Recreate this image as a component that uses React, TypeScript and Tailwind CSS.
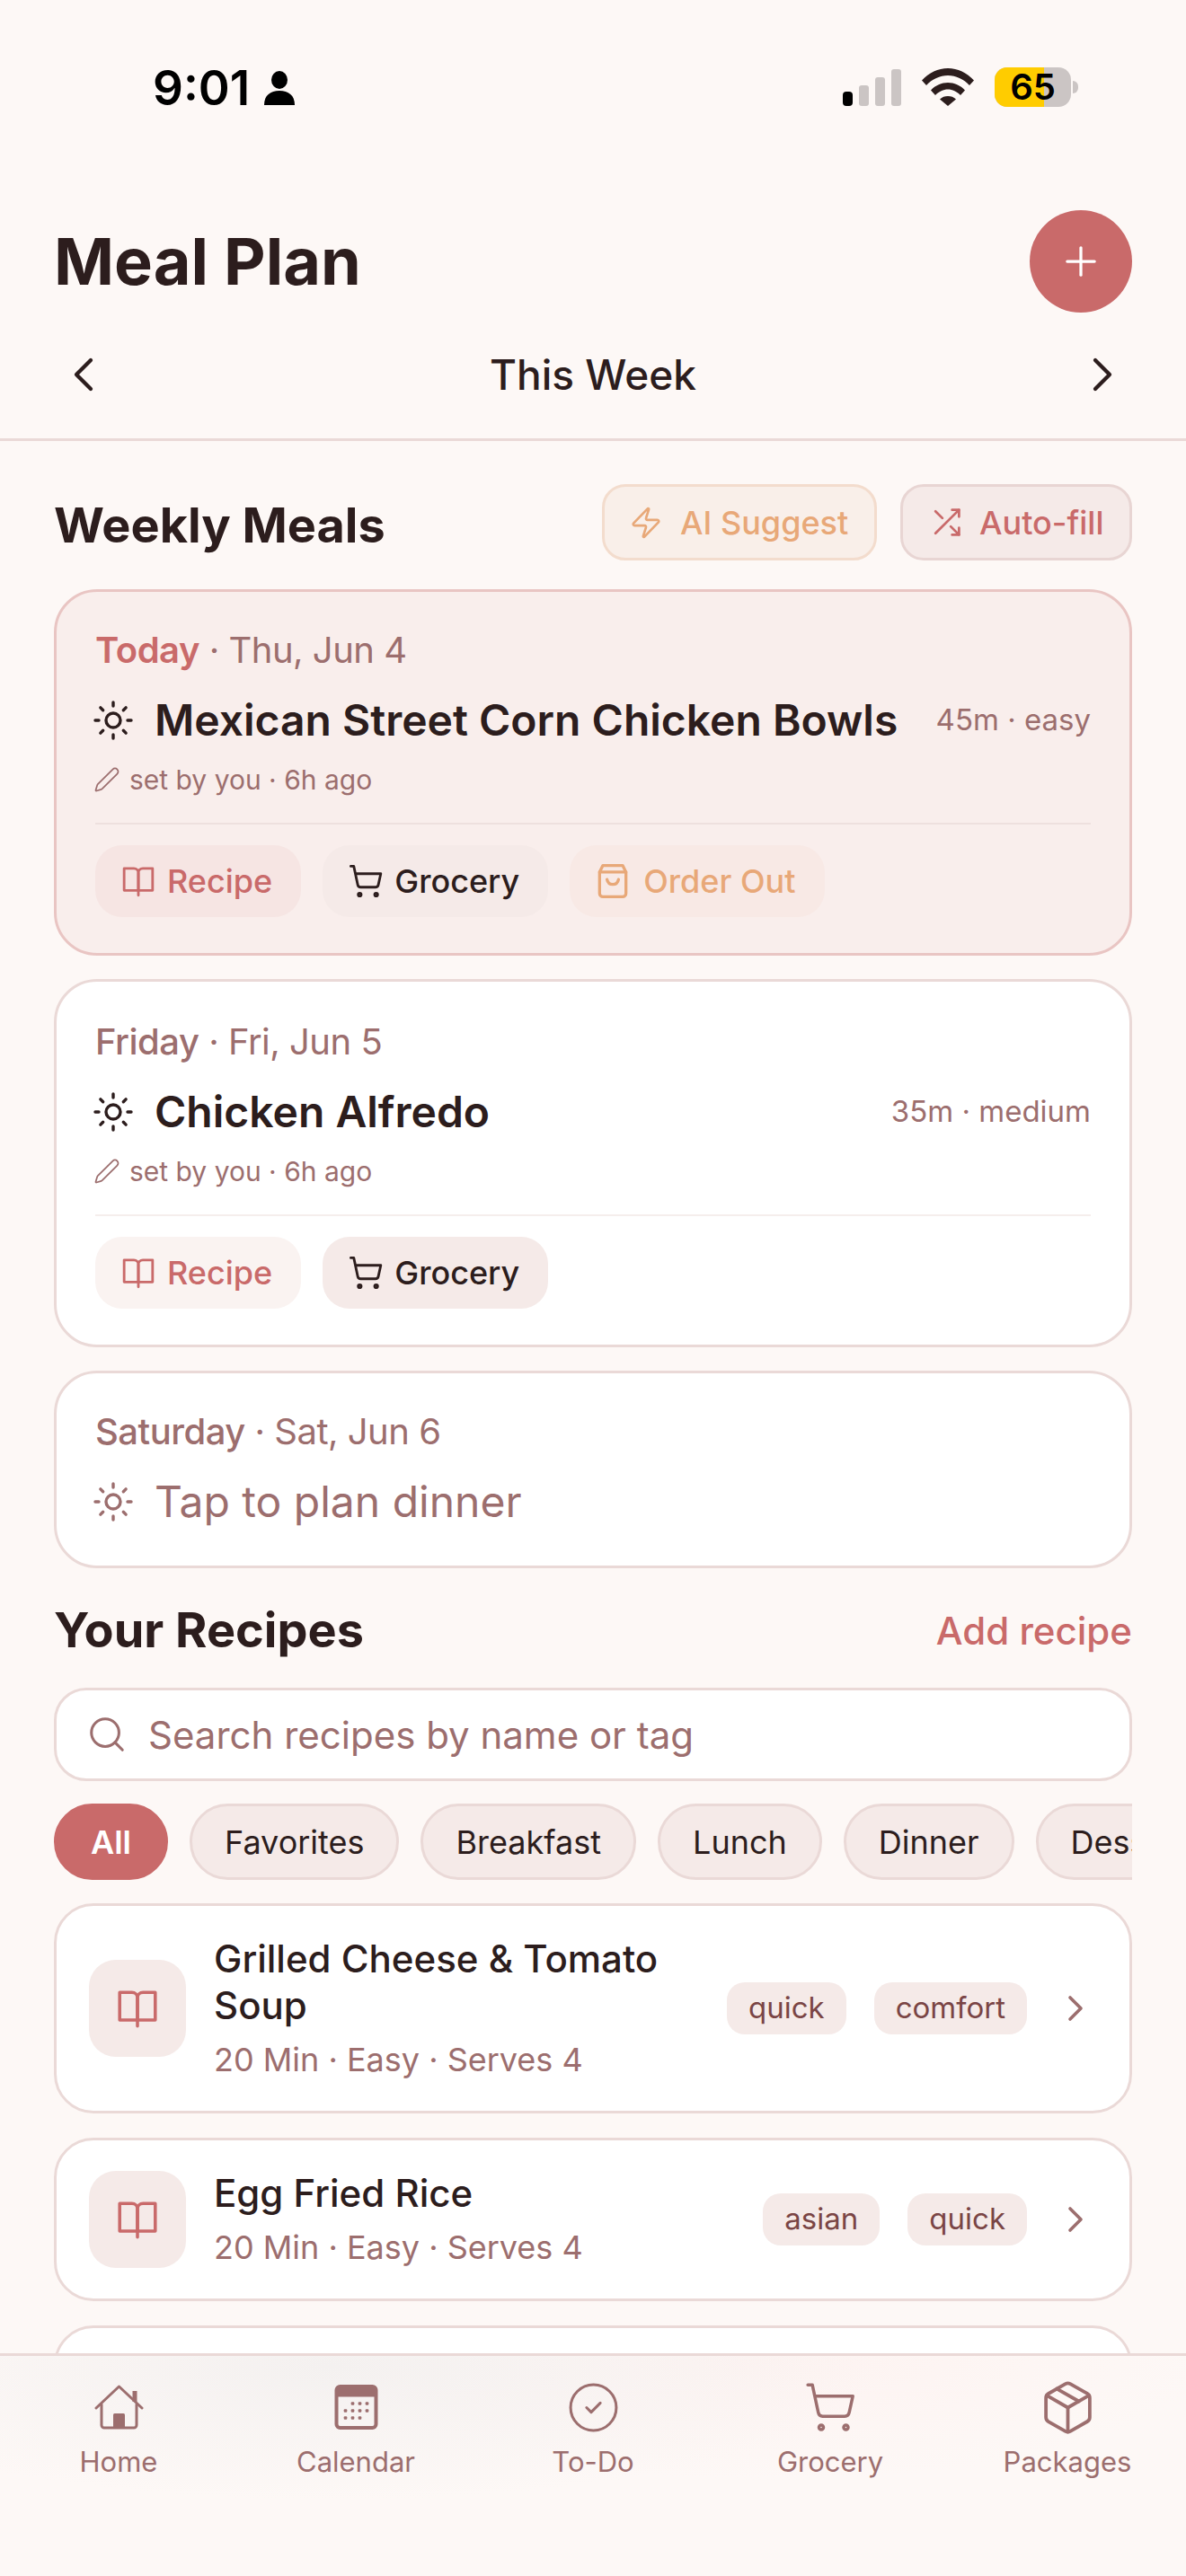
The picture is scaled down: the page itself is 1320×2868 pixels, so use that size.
import React from 'react';
import { ChevronLeft, ChevronRight, CircleCheck, Package, Pen, Plus, Search, ShoppingCart, Sun, Zap } from 'lucide-react';

const FONT = { fontFamily: 'Inter, "Noto Sans", sans-serif' };

const BookIcon = ({ className }: { className?: string }) => (
  <svg viewBox="0 0 24 24" fill="none" stroke="currentColor" strokeWidth="1.7" strokeLinejoin="round" strokeLinecap="round" className={className}>
    <path d="M2.500 3.500h6.500c1.700 0 3 1.200 3 3v11.700H2.500z" />
    <path d="M21.500 3.500H15c-1.700 0-3 1.200-3 3v11.700h9.500z" />
    <path d="M12 18.500v3" />
  </svg>
);

const BagIcon = ({ className }: { className?: string }) => (
  <svg viewBox="0 0 24 24" fill="none" stroke="currentColor" strokeWidth="1.8" strokeLinejoin="round" strokeLinecap="round" className={className}>
    <path d="M6 2.500h12l2 4v13a2 2 0 0 1-2 2H6a2 2 0 0 1-2-2v-13z" />
    <path d="M4 6.500h16" />
    <path d="M8.500 11c.4 2 1.800 3 3.500 3s3.100-1 3.500-3" />
  </svg>
);

const ShuffleIcon = ({ className }: { className?: string }) => (
  <svg viewBox="0 0 24 24" fill="none" stroke="currentColor" strokeWidth="1.8" strokeLinejoin="round" strokeLinecap="round" className={className}>
    <path d="M16 3h5v5" />
    <path d="M4 20 21 3" />
    <path d="M21 16v5h-5" />
    <path d="m15 15 6 6" />
    <path d="M4 4l5 5" />
  </svg>
);

const HomeIcon = ({ className }: { className?: string }) => (
  <svg viewBox="0 0 55 50" fill="none" stroke="currentColor" strokeWidth="3" strokeLinejoin="round" strokeLinecap="round" className={className}>
    <path d="M2 26 27.500 2 53 26" />
    <path d="M45 19V7" strokeWidth="5" strokeLinecap="butt" />
    <path d="M8 22v23a3 3 0 0 0 3 3h33a3 3 0 0 0 3-3V22" />
    <rect x="21" y="32" width="13" height="17" rx="1.500" fill="currentColor" stroke="none" />
  </svg>
);

const CalendarIcon = ({ className }: { className?: string }) => {
  const dots: [number, number][] = [
    [21, 21], [29, 21], [37, 21],
    [13, 29], [21, 29], [29, 29], [37, 29],
    [13, 37], [21, 37], [29, 37],
  ];
  return (
    <svg viewBox="0 0 50 50" fill="none" className={className}>
      <path fillRule="evenodd" clipRule="evenodd" fill="currentColor" d="M7 0h36a6 6 0 0 1 6 6v38a6 6 0 0 1-6 6H7a6 6 0 0 1-6-6V6a6 6 0 0 1 6-6zm-2 13.500V44a2 2 0 0 0 2 2h36a2 2 0 0 0 2-2V13.500z" />
      {dots.map(([x, y]) => (
        <rect key={`${x}-${y}`} x={x - 1.800} y={y - 1.800} width="3.600" height="3.600" rx="1" fill="currentColor" />
      ))}
    </svg>
  );
};

const MutedDate = ({ head, date, accent }: { head: string; date: string; accent?: boolean }) => (
  <div className="text-[40px] leading-[48px] tracking-[-0.5px] text-[#9c6e6e]">
    <span className={accent ? 'font-semibold text-[#c96a6a]' : 'font-medium'}>{head}</span> · {date}
  </div>
);

const SetBy = () => (
  <div className="mt-[17px] flex items-center gap-[10px] text-[30px] leading-[40px] text-[#9c6e6e]">
    <Pen className="-ml-[2px] h-[30px] w-[30px]" strokeWidth={1.4} />
    <span>set by you · 6h ago</span>
  </div>
);

const MealAction = ({ icon, label, className }: { icon: React.ReactNode; label: string; className: string }) => (
  <div className={`flex h-[80px] items-center gap-[12px] rounded-[30px] pl-[28px] pr-[32px] text-[36px] font-medium ${className}`}>
    {icon}
    <span>{label}</span>
  </div>
);

const Chip = ({ label, active }: { label: string; active?: boolean }) => (
  <div className={`flex h-[85px] shrink-0 items-center rounded-full border-[3px] text-[36px] ${active ? 'border-[#c96a6a] bg-[#c96a6a] px-[38px] font-semibold text-white' : 'border-[#ead9d7] bg-[#f5eae8] px-[36px] text-[#2c1d1d]'}`}>
    {label}
  </div>
);

const Tag = ({ label }: { label: string }) => (
  <div className="flex h-[58px] items-center rounded-[20px] bg-[#f5eae8] px-[24px] text-[33px] text-[#7a4545]">{label}</div>
);

const RecipeRow = ({ name, tags }: { name: string; tags: string[] }) => (
  <div className="flex items-center rounded-[44px] border-[3px] border-[#ead9d7] bg-white py-[33px] pl-[36px] pr-[36px]">
    <div className="flex h-[108px] w-[108px] shrink-0 items-center justify-center rounded-[30px] bg-[#f5eae8] text-[#c96a6a]">
      <BookIcon className="h-[50px] w-[50px]" />
    </div>
    <div className="ml-[31px] min-w-0 flex-1 pr-[20px]">
      <div className="text-[42px] font-medium leading-[52px] text-[#2c1d1d]">{name}</div>
      <div className="mt-[10px] text-[36px] leading-[48px] text-[#9c6e6e]">20 Min · Easy · Serves 4</div>
    </div>
    <div className="flex shrink-0 items-center gap-[31px]">
      {tags.map((t) => <Tag key={t} label={t} />)}
    </div>
    <ChevronRight className="ml-[30px] h-[48px] w-[48px] shrink-0 text-[#9c6e6e]" strokeWidth={1.8} />
  </div>
);

const TabItem = ({ icon, label }: { icon: React.ReactNode; label: string }) => (
  <div className="flex flex-col items-center text-[#9c6e6e]">
    <div className="flex h-[64px] items-center justify-center">{icon}</div>
    <div className="mt-[9px] text-[31px] leading-[40px]">{label}</div>
  </div>
);

const App: React.FC = () => {
  return (
    <div style={FONT} className="flex h-[2868px] w-[1320px] flex-col overflow-hidden bg-[#fdf8f6] text-[#2c1d1d]">
      {/* status bar */}
      <div className="flex h-[234px] shrink-0 items-start justify-between pl-[170px] pr-[120px] pt-[67px]">
        <div className="flex items-center gap-[16px] text-black">
          <span className="text-[53px] font-semibold leading-[62px]">9:01</span>
          <svg viewBox="0 0 34 38" className="h-[38px] w-[34px]" fill="currentColor">
            <ellipse cx="17" cy="10" rx="9" ry="10" />
            <path d="M0 38c0-11 7-16 17-16s17 5 17 16z" />
          </svg>
        </div>
        <div className="flex items-center pt-[8px]">
          <div className="flex items-end gap-[7px]">
            <div className="h-[16px] w-[11px] rounded-[4px] bg-black" />
            <div className="h-[23px] w-[11px] rounded-[3px] bg-[#cbc5c4]" />
            <div className="h-[32px] w-[11px] rounded-[3px] bg-[#cbc5c4]" />
            <div className="h-[41px] w-[11px] rounded-[3px] bg-[#cbc5c4]" />
          </div>
          <svg viewBox="0 0 58 42" className="ml-[23px] h-[42px] w-[58px]" fill="currentColor">
            <path d="M0 13.500C8 5 18 0 29 0s21 5 29 13.500l-5 5.500C46.500 12 38 8 29 8s-17.500 4-24 11z" />
            <path d="M10 24.500C15 19 22 16 29 16s14 3 19 8.500l-5 5.500c-4-4-9-6.500-14-6.500S19 26 15 30z" />
            <path d="M20 34.500c2.500-2.500 5.500-3.500 9-3.500s6.500 1 9 3.500L29 42z" />
          </svg>
          <div className="relative ml-[23px] flex h-[44px] w-[85px] items-center justify-center rounded-[14px] bg-[#cbc5c4] text-[40px] font-semibold leading-[44px] text-black">
            <div className="absolute inset-y-0 left-0 w-[55px] rounded-l-[14px] bg-[#ffcc00]" />
            <span className="relative">65</span>
          </div>
          <div className="ml-[2px] h-[14px] w-[6px] rounded-r-full bg-[#cbc5c4]" />
        </div>
      </div>

      {/* title */}
      <div className="flex h-[114px] shrink-0 items-center justify-between pl-[60px] pr-[60px]">
        <h1 className="text-[72px] font-bold leading-none">Meal Plan</h1>
        <div className="flex h-[114px] w-[114px] items-center justify-center rounded-full bg-[#c96a6a] text-white">
          <Plus className="h-[52px] w-[52px]" strokeWidth={1.5} />
        </div>
      </div>

      {/* week nav */}
      <div className="mt-[36px] flex h-[107px] shrink-0 items-center justify-between border-b-[3px] border-[#ead9d7] px-[61px] pb-[38px]">
        <ChevronLeft className="h-[64px] w-[64px]" strokeWidth={1.6} />
        <span className="text-[46px] font-medium leading-[48px]">This Week</span>
        <ChevronRight className="h-[64px] w-[64px]" strokeWidth={1.6} />
      </div>

      {/* scroll area */}
      <main className="min-h-0 flex-1 overflow-hidden px-[60px] pt-[48px]">
        <div className="flex h-[85px] items-center justify-between">
          <h2 className="pt-[6px] text-[54px] font-bold leading-none">Weekly Meals</h2>
          <div className="flex gap-[26px]">
            <div className="flex h-[85px] w-[306px] items-center gap-[19px] rounded-[26px] border-[3px] border-[#f3dccd] bg-[#f9efe9] pl-[27px] text-[36px] font-medium text-[#e8a878]">
              <Zap className="h-[38px] w-[38px]" strokeWidth={1.7} />
              AI Suggest
            </div>
            <div className="flex h-[85px] w-[258px] items-center gap-[18px] rounded-[26px] border-[3px] border-[#e8d5d3] bg-[#f5eae8] pl-[30px] text-[36px] font-medium text-[#c96a6a]">
              <ShuffleIcon className="h-[37px] w-[37px]" />
              Auto-fill
            </div>
          </div>
        </div>

        <div className="mt-[32px] flex flex-col gap-[26px]">
          <section className="rounded-[48px] border-[3px] border-[#e9c5c3] bg-[#f9eeec] px-[43px] pb-[40px] pt-[41px]">
            <MutedDate head="Today" date="Thu, Jun 4" accent />
            <div className="mt-[25px] flex items-center">
              <Sun className="-ml-[4px] h-[48px] w-[48px] shrink-0" strokeWidth={1.7} />
              <div className="ml-[22px] flex-1 text-[48px] font-semibold leading-[58px]">Mexican Street Corn Chicken Bowls</div>
              <div className="text-[33px] text-[#9c6e6e]">45m · easy</div>
            </div>
            <SetBy />
            <div className="mt-[28px] border-t-2 border-[#eee0de] pt-[23px]">
              <div className="flex gap-[24px]">
                <MealAction icon={<BookIcon className="h-[40px] w-[40px]" />} label="Recipe" className="bg-[#f6e5e3] text-[#c96a6a]" />
                <MealAction icon={<ShoppingCart className="h-[40px] w-[40px]" strokeWidth={1.7} />} label="Grocery" className="bg-[#f5eae8] text-[#2c1d1d]" />
                <MealAction icon={<BagIcon className="-ml-[2px] h-[44px] w-[44px]" />} label="Order Out" className="bg-[#f8e9e5] text-[#e8a878]" />
              </div>
            </div>
          </section>

          <section className="rounded-[48px] border-[3px] border-[#ead9d7] bg-white px-[43px] pb-[40px] pt-[43px]">
            <MutedDate head="Friday" date="Fri, Jun 5" />
            <div className="mt-[25px] flex items-center">
              <Sun className="-ml-[4px] h-[48px] w-[48px] shrink-0" strokeWidth={1.7} />
              <div className="ml-[22px] flex-1 text-[48px] font-semibold leading-[58px]">Chicken Alfredo</div>
              <div className="text-[33px] text-[#9c6e6e]">35m · medium</div>
            </div>
            <SetBy />
            <div className="mt-[28px] border-t-2 border-[#f5eeec] pt-[23px]">
              <div className="flex gap-[24px]">
                <MealAction icon={<BookIcon className="h-[40px] w-[40px]" />} label="Recipe" className="bg-[#faf3f1] text-[#c96a6a]" />
                <MealAction icon={<ShoppingCart className="h-[40px] w-[40px]" strokeWidth={1.7} />} label="Grocery" className="bg-[#f5eae8] text-[#2c1d1d]" />
              </div>
            </div>
          </section>

          <section className="rounded-[48px] border-[3px] border-[#ead9d7] bg-white px-[43px] pb-[42px] pt-[41px]">
            <MutedDate head="Saturday" date="Sat, Jun 6" />
            <div className="mt-[25px] flex items-center text-[#9c6e6e]">
              <Sun className="-ml-[4px] h-[48px] w-[48px] shrink-0" strokeWidth={1.7} />
              <div className="ml-[22px] text-[48px] leading-[58px]">Tap to plan dinner</div>
            </div>
          </section>
        </div>

        <div className="mt-[37px] flex items-center justify-between">
          <h2 className="text-[54px] font-bold leading-[64px]">Your Recipes</h2>
          <span className="text-[42px] font-medium text-[#c96a6a]">Add recipe</span>
        </div>

        <div className="mt-[32px] flex h-[104px] items-center gap-[23px] rounded-[36px] border-[3px] border-[#ead9d7] bg-white pl-[33px] text-[#9c6e6e]">
          <Search className="h-[46px] w-[46px]" strokeWidth={1.6} />
          <span className="text-[42px]">Search recipes by name or tag</span>
        </div>

        <div className="mt-[25px] flex gap-[24px] overflow-hidden">
          <Chip label="All" active />
          <Chip label="Favorites" />
          <Chip label="Breakfast" />
          <Chip label="Lunch" />
          <Chip label="Dinner" />
          <Chip label="Dessert" />
        </div>

        <div className="mt-[26px] flex flex-col gap-[27px]">
          <RecipeRow name="Grilled Cheese & Tomato Soup" tags={['quick', 'comfort']} />
          <RecipeRow name="Egg Fried Rice" tags={['asian', 'quick']} />
          <div className="h-[200px] shrink-0 rounded-[44px] border-[3px] border-[#ead9d7] bg-white" />
        </div>
      </main>

      {/* tab bar */}
      <nav className="grid h-[248px] shrink-0 grid-cols-5 border-t-[3px] border-[#ead9d7] bg-[#fdf8f6] bg-[radial-gradient(ellipse_at_28%_5%,#f4f1f0_0%,transparent_45%),radial-gradient(ellipse_at_65%_0%,#fdf3f1_0%,transparent_40%)] pt-[25px]">
        <TabItem icon={<HomeIcon className="h-[50px] w-[55px]" />} label="Home" />
        <TabItem icon={<CalendarIcon className="h-[50px] w-[53px]" />} label="Calendar" />
        <TabItem icon={<CircleCheck className="h-[61px] w-[61px]" strokeWidth={1.2} />} label="To-Do" />
        <TabItem icon={<ShoppingCart className="h-[60px] w-[60px]" strokeWidth={1.4} />} label="Grocery" />
        <TabItem icon={<Package className="h-[65px] w-[65px]" strokeWidth={1.4} />} label="Packages" />
      </nav>
    </div>
  );
};

export default App;
